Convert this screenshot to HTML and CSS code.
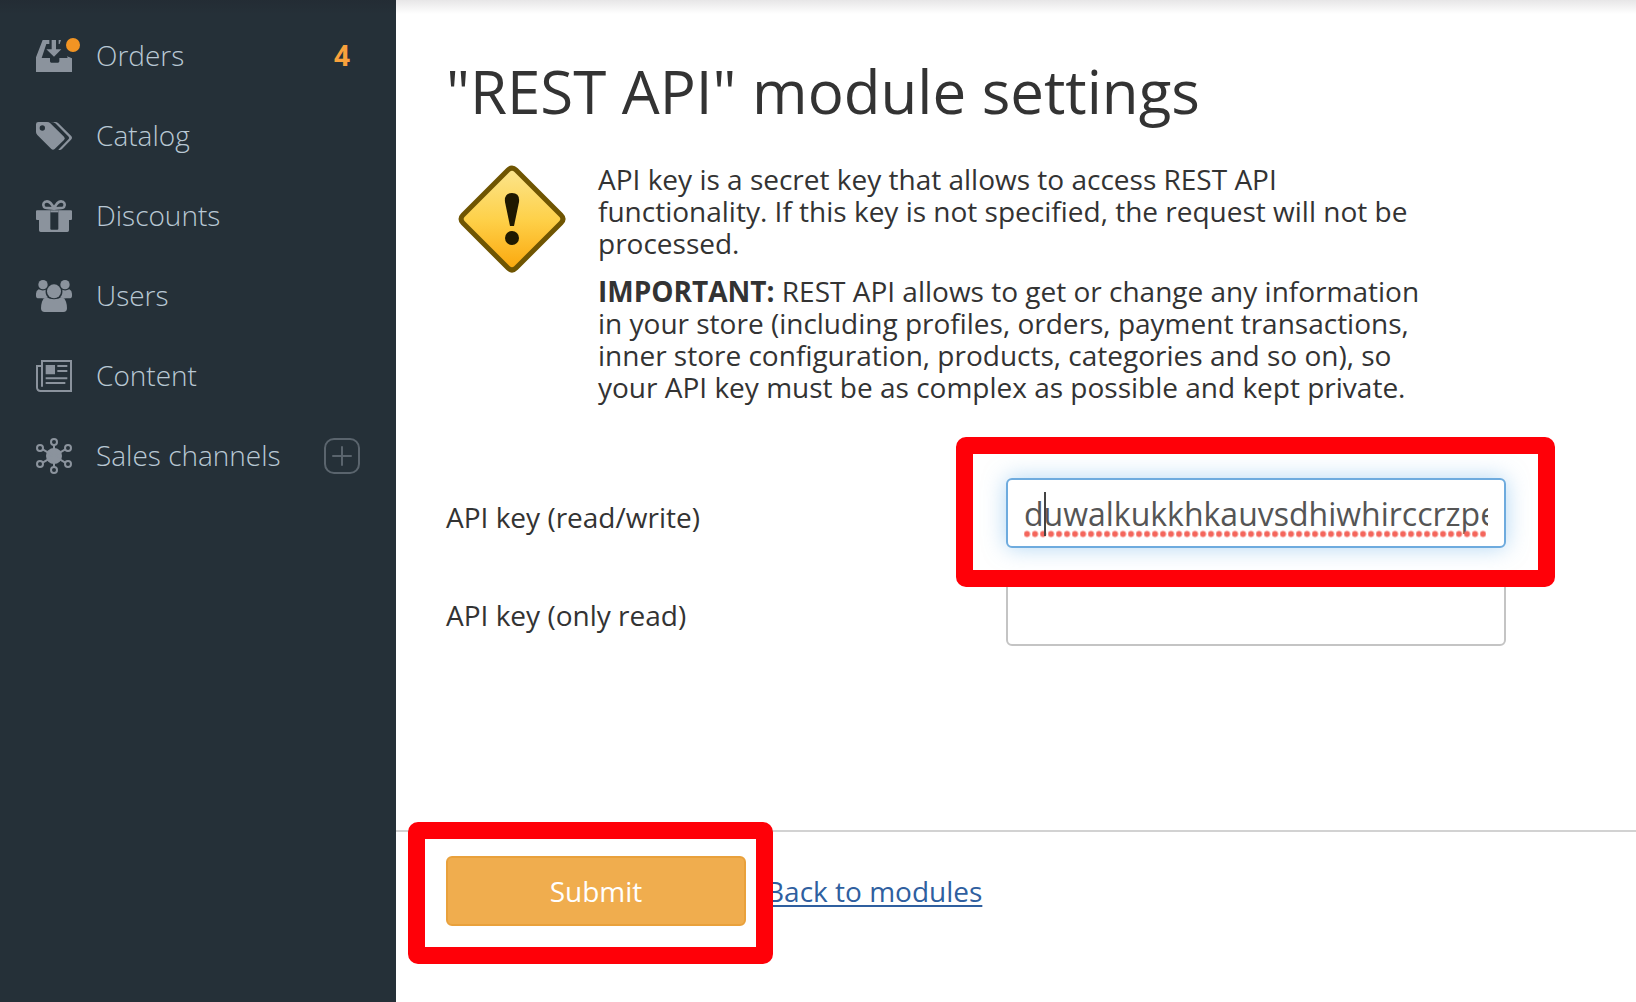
FILE: index.html
```html
<!DOCTYPE html>
<html lang="en">
<head>
    <meta charset="utf-8">
    <title>"REST API" module settings</title>
    <link rel="stylesheet" href="styles.css">
</head>
<body>
    <div class="page">
        <nav class="sidebar">
            <ul class="menu">
                <li class="menu-item">
                    <a href="#" class="menu-link">
                        <svg class="icon" viewBox="0 0 108 108" aria-hidden="true">
                            <path d="M20 6h20v12h-9L17 60h25v10q0 4 4 4h20q4 0 4-4V60h25l-2-5 15 6v41H0V58z"/>
                            <path d="M47 6h13v28h16L54 56 31 34h16zM68 6h7l-4 12h-3z"/>
                            <circle class="dot" cx="111" cy="21" r="21"/>
                        </svg>
                        <span class="menu-text">Orders</span>
                    </a>
                    <span class="menu-text count">4</span>
                </li>
                <li class="menu-item">
                    <a href="#" class="menu-link">
                        <svg class="icon" viewBox="0 0 108 108" aria-hidden="true">
                            <path fill-rule="evenodd" d="M7 12h26q6 0 10 4l41 40q5 5 0 10L56 93q-5 5-10 0L4 51q-4-4-4-9V19q0-7 7-7zM19 22a8 8 0 1 0 0 16a8 8 0 0 0 0-16z"/>
                            <path d="M43 12h14q6 0 10 4l38 37q6 6 0 12L78 93q-5 5-11 2l31-32q3-3 0-7L58 16q-4-4-15-4z"/>
                        </svg>
                        <span class="menu-text">Catalog</span>
                    </a>
                </li>
                <li class="menu-item">
                    <a href="#" class="menu-link">
                        <svg class="icon" viewBox="0 0 108 108" aria-hidden="true">
                            <path d="M3 37h40v55q0 3 3 3h18q3 0 3-3V37h38q3 0 3 3v23q0 3-3 3h-6v31q0 5-5 5H14q-5 0-5-5V66H3q-3 0-3-3V40q0-3 3-3z"/>
                            <path d="M43 37h24v6H43z"/>
                            <path class="line gift-bow" d="M54 32C48 18 42 10 33 10C23 10 19 20 24 27C29 33 43 28 54 32C60 18 66 10 75 10C85 10 89 20 84 27C79 33 65 28 54 32"/>
                        </svg>
                        <span class="menu-text">Discounts</span>
                    </a>
                </li>
                <li class="menu-item">
                    <a href="#" class="menu-link">
                        <svg class="icon" viewBox="0 0 108 108" aria-hidden="true">
                            <circle cx="21" cy="20" r="14"/>
                            <circle cx="87" cy="20" r="14"/>
                            <circle cx="54" cy="40" r="21"/>
                            <path d="M8 34q12 6 21 1q-2 16 7 23q-13 4-17 3H8q-8 0-8-8V47q0-9 8-13zM100 34q-12 6-21 1q2 16-7 23q13 4 17 3h11q8 0 8-8V47q0-9-8-13z"/>
                            <path d="M30 57q24 14 48 0q9 3 12 14q3 9 3 20q0 11-11 11H26q-11 0-11-11q0-11 3-20q3-11 12-14z"/>
                        </svg>
                        <span class="menu-text">Users</span>
                    </a>
                </li>
                <li class="menu-item">
                    <a href="#" class="menu-link">
                        <svg class="icon" viewBox="0 0 108 108" aria-hidden="true">
                            <path class="line" d="M18 86V9h87v90H14Q3 99 3 88V24h13"/>
                            <path d="M29 21h28v28H29zM64 21h30v6H64zM64 36h30v6H64zM29 58h65v6H29zM29 72h59v6H29z"/>
                        </svg>
                        <span class="menu-text">Content</span>
                    </a>
                </li>
                <li class="menu-item">
                    <a href="#" class="menu-link">
                        <svg class="icon" viewBox="0 0 108 108" aria-hidden="true">
                            <circle cx="54" cy="54" r="24"/>
                            <g class="line">
                                <path d="M54 21v66M20 34l68 40M88 34L20 74"/>
                                <circle cx="54" cy="12" r="9"/>
                                <circle cx="54" cy="96" r="9"/>
                                <circle cx="12" cy="30" r="9"/>
                                <circle cx="96" cy="30" r="9"/>
                                <circle cx="12" cy="78" r="9"/>
                                <circle cx="96" cy="78" r="9"/>
                            </g>
                        </svg>
                        <span class="menu-text">Sales channels</span>
                    </a>
                    <button type="button" class="add" aria-label="Add sales channel">
                        <svg viewBox="0 0 20 20" aria-hidden="true"><path d="M10 1v18M1 10h18"/></svg>
                    </button>
                </li>
            </ul>
        </nav>

        <main class="main">
            <h1 class="title">"REST API" module settings</h1>

            <div class="notice">
                <svg class="warning" viewBox="0 0 108 108" aria-hidden="true">
                    <defs>
                        <linearGradient id="sign" x1="0" y1="0" x2="0" y2="1">
                            <stop offset="0" stop-color="#fbe58e"/>
                            <stop offset="0.5" stop-color="#fed14a"/>
                            <stop offset="1" stop-color="#fba70c"/>
                        </linearGradient>
                    </defs>
                    <path class="warning-sign" d="M50 5q4-4 8 0l45 45q4 4 0 8l-45 45q-4 4-8 0L5 58q-4-4 0-8z"/>
                    <path d="M54 28q8 0 7 9l-5 24h-4l-5-24q-1-9 7-9z"/>
                    <circle cx="54" cy="73" r="7"/>
                </svg>
                <div class="notice-text">
                    <p>API key is a secret key that allows to access REST API functionality. If this key is not specified, the request will not be processed.</p>
                    <p><strong>IMPORTANT:</strong> REST API allows to get or change any information in your store (including profiles, orders, payment transactions, inner store configuration, products, categories and so on), so your API key must be as complex as possible and kept private.</p>
                </div>
            </div>

            <form class="settings" id="settings">
                <div class="row">
                    <label for="key">API key (read/write)</label>
                    <div class="field marked">
                        <input type="text" id="key" class="input input-active" spellcheck="false" value="duwalkukkhkauvsdhiwhirccrzpe">
                        <span class="misspelled"></span>
                        <span class="caret"></span>
                    </div>
                </div>
                <div class="row">
                    <label for="key-read">API key (only read)</label>
                    <div class="field">
                        <input type="text" id="key-read" class="input">
                    </div>
                </div>
            </form>

            <div class="actions">
                <div class="submit marked">
                    <button type="submit" form="settings" class="button">Submit</button>
                </div>
                <a href="#" class="back">Back to modules</a>
            </div>
        </main>
    </div>
</body>
</html>
```
FILE: styles.css
```css
* {
    box-sizing: border-box;
}
body {
    margin: 0;
    background: #fff;
    color: #333;
    font-family: "Open Sans", "Noto Sans", sans-serif;
    font-size: 28px;
    line-height: 32px;
}
.page {
    position: relative;
    display: flex;
    min-height: 100vh;
}
/* shadow of the header */
.page::before {
    content: "";
    position: absolute;
    top: 0;
    left: 0;
    right: 0;
    height: 14px;
    background: linear-gradient(rgba(20, 10, 20, 0.1), rgba(20, 10, 20, 0));
}

/* sidebar */
.sidebar {
    flex: none;
    width: 396px;
    padding: 16px 36px;
    background: #253038;
}
.menu {
    margin: 0;
    padding: 0;
    list-style: none;
}
.menu-item {
    display: flex;
    align-items: center;
    justify-content: space-between;
    height: 80px;
}
.menu-link {
    display: flex;
    align-items: center;
    gap: 24px;
    color: #b9c8d4;
    font-weight: 300;
    text-decoration: none;
}
.menu-text {
    padding-bottom: 2px;
}
.icon {
    width: 36px;
    height: 36px;
    overflow: visible;
    fill: #8b939d;
}
.icon .line {
    fill: none;
    stroke: #8b939d;
    stroke-width: 6;
}
.icon .gift-bow {
    stroke-width: 8;
}
.icon .dot {
    fill: #f29423;
}
.count {
    padding-right: 10px;
    color: #f8a13c;
    font-weight: 700;
}
.add {
    display: flex;
    align-items: center;
    justify-content: center;
    width: 36px;
    height: 36px;
    padding: 0;
    border: 2px solid #5a646d;
    border-radius: 10px;
    background: none;
}
.add svg {
    width: 20px;
    height: 20px;
    stroke: #5a646d;
    stroke-width: 2;
    stroke-linecap: round;
}

/* content */
.main {
    flex: 1;
    min-width: 0;
}
.title {
    margin: 0;
    padding: 58px 50px 0;
    font-size: 60px;
    font-weight: 400;
    line-height: 66px;
}
.notice {
    display: flex;
    gap: 32px;
    padding: 39px 62px 0;
}
.warning {
    flex: none;
    width: 108px;
    height: 110px;
    padding-top: 2px;
    fill: #1f1900;
}
.warning .warning-sign {
    fill: url(#sign);
    stroke: #6f5502;
    stroke-width: 5;
}
.notice-text {
    max-width: 840px;
}
.notice-text p {
    margin: 0 0 16px;
}
.settings {
    display: grid;
    gap: 28px;
    padding: 59px 50px 184px;
}
.row {
    display: grid;
    grid-template-columns: 560px minmax(0, 500px);
    align-items: center;
}
.row label {
    padding-top: 8px;
}
.field {
    position: relative;
}
.input {
    display: block;
    width: 100%;
    height: 70px;
    padding: 0 16px;
    border: 2px solid #c4c4c4;
    border-radius: 6px;
    background: #fff;
    color: #555;
    font-family: inherit;
    font-size: 32px;
    outline: none;
}
.input-active {
    border-color: #6eabde;
    box-shadow: 0 0 22px rgba(102, 175, 233, 0.5);
}
.caret {
    position: absolute;
    top: 14px;
    left: 38px;
    width: 2px;
    height: 44px;
    background: #444;
}
.misspelled {
    position: absolute;
    left: 18px;
    right: 20px;
    bottom: 10px;
    height: 8px;
    background: radial-gradient(circle at 3px 4px, #f4665c 2px, rgba(244, 102, 92, 0) 4px) 0 0 / 8px 8px;
}

/* red frames */
.marked {
    position: relative;
    z-index: 1;
}
.marked::after {
    content: "";
    position: absolute;
    inset: -41px -49px -39px -50px;
    border: 17px solid #ff0008;
    border-radius: 10px;
    pointer-events: none;
}
.submit.marked::after {
    inset: -34px -27px -38px -38px;
}

/* buttons */
.actions {
    display: flex;
    align-items: center;
    gap: 20px;
    padding: 24px 50px;
    border-top: 2px solid #d2d2d2;
}
.button {
    width: 300px;
    height: 70px;
    border: 2px solid #e9a13c;
    border-radius: 6px;
    background: #f0ad4e;
    color: #fff;
    font-family: inherit;
    font-size: 28px;
}
.submit {
    display: flex;
}
.back {
    color: #2f5f9f;
    text-decoration-thickness: 2px;
    text-underline-offset: 3px;
}
```
